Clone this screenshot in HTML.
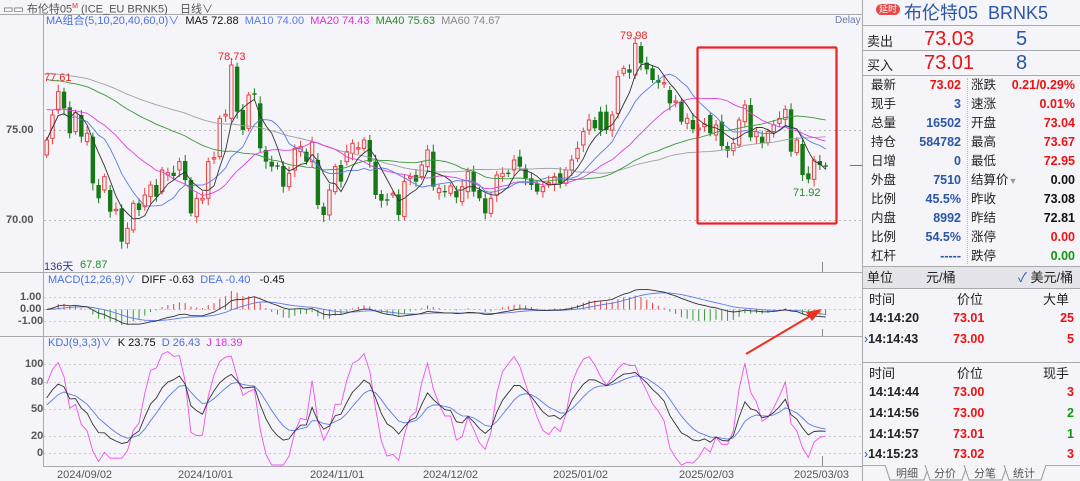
<!DOCTYPE html>
<html><head><meta charset="utf-8"><style>
*{margin:0;padding:0;box-sizing:border-box}
body{width:1080px;height:481px;background:#f4f4f9;font-family:"Liberation Sans","Noto Sans CJK SC",sans-serif;position:relative;overflow:hidden}
.a{position:absolute;white-space:nowrap}
.rp{position:absolute;left:862px;top:0;width:218px;height:481px;border-left:1px solid #aaa;background:#f4f4f9}
.row{position:absolute;left:0;width:218px;font-size:12.5px;height:19px;line-height:19px}
.l{position:absolute;left:8px;color:#222}
.v{position:absolute;right:120px;font-weight:bold;text-align:right}
.l2{position:absolute;left:108px;color:#222}
.v2{position:absolute;right:6px;font-weight:bold;text-align:right}
.red{color:#ee1111}.blu{color:#2a56a8}.blk{color:#111}.grn{color:#119911}
.t{position:absolute;font-size:12.5px;font-weight:bold;height:20px;line-height:20px}
</style></head><body>
<svg id="ch" width="862" height="481" style="position:absolute;left:0;top:0" xmlns="http://www.w3.org/2000/svg"></svg>

<div class="a" style="left:3px;top:0;font-size:11px;color:#555;line-height:13px">▭▭ 布伦特05<sup style="color:#e22;font-size:7px">M</sup> (ICE_EU BRNK5)&nbsp;&nbsp;&nbsp;&nbsp;日线∨</div>
<div class="a" style="left:46px;top:14px;font-size:11px;line-height:14px"><span style="color:#4a6ee0">MA组合(5,10,20,40,60,0)∨</span>&nbsp;&nbsp;<span style="color:#111">MA5 72.88</span>&nbsp;&nbsp;<span style="color:#5b7be8">MA10 74.00</span>&nbsp;&nbsp;<span style="color:#e030e0">MA20 74.43</span>&nbsp;&nbsp;<span style="color:#2a8a2a">MA40 75.63</span>&nbsp;&nbsp;<span style="color:#888">MA60 74.67</span></div>
<div class="a" style="left:835px;top:15px;font-size:10px;color:#6a7ab0">Delay</div>
<div class="a" style="left:6px;top:124px;font-size:11px;color:#555;font-weight:bold">75.00</div>
<div class="a" style="left:6px;top:214px;font-size:11px;color:#555;font-weight:bold">70.00</div>
<div class="a" style="left:44px;top:72px;font-size:11px;color:#e22">77.61</div>
<div class="a" style="left:218px;top:51px;font-size:11px;color:#e22">78.73</div>
<div class="a" style="left:620px;top:30px;font-size:11px;color:#e22">79.98</div>
<div class="a" style="left:80px;top:259px;font-size:11px;color:#2a8a2a">67.87</div>
<div class="a" style="left:793px;top:187px;font-size:11px;color:#2a8a2a">71.92</div>
<div class="a" style="left:44px;top:258px;font-size:11px;color:#2a3a9a">136天</div>
<div class="a" style="left:48px;top:274px;font-size:11px;line-height:13px"><span style="color:#4a6ee0">MACD(12,26,9)∨</span>&nbsp;&nbsp;<span style="color:#111">DIFF -0.63</span>&nbsp;&nbsp;<span style="color:#4a6ee0">DEA -0.40</span>&nbsp;&nbsp;&nbsp;<span style="color:#111">-0.45</span></div>
<div class="a" style="left:20px;top:291px;font-size:11px;color:#555;font-weight:bold">1.00</div>
<div class="a" style="left:20px;top:303px;font-size:11px;color:#555;font-weight:bold">0.00</div>
<div class="a" style="left:18px;top:315px;font-size:11px;color:#555;font-weight:bold">-1.00</div>
<div class="a" style="left:48px;top:337px;font-size:11px;line-height:13px"><span style="color:#4a6ee0">KDJ(9,3,3)∨</span>&nbsp;&nbsp;<span style="color:#111">K 23.75</span>&nbsp;&nbsp;<span style="color:#4a6ee0">D 26.43</span>&nbsp;&nbsp;<span style="color:#e030e0">J 18.39</span></div>
<div class="a" style="left:25px;top:358px;font-size:11px;color:#555;font-weight:bold">100</div>
<div class="a" style="left:31px;top:376px;font-size:11px;color:#555;font-weight:bold">80</div>
<div class="a" style="left:31px;top:403px;font-size:11px;color:#555;font-weight:bold">50</div>
<div class="a" style="left:31px;top:430px;font-size:11px;color:#555;font-weight:bold">20</div>
<div class="a" style="left:37px;top:447px;font-size:11px;color:#555;font-weight:bold">0</div>
<div class="a" style="left:57px;top:469px;font-size:11px;color:#555">2024/09/02</div>
<div class="a" style="left:178px;top:469px;font-size:11px;color:#555">2024/10/01</div>
<div class="a" style="left:310px;top:469px;font-size:11px;color:#555">2024/11/01</div>
<div class="a" style="left:423px;top:469px;font-size:11px;color:#555">2024/12/02</div>
<div class="a" style="left:553px;top:469px;font-size:11px;color:#555">2025/01/02</div>
<div class="a" style="left:679px;top:469px;font-size:11px;color:#555">2025/02/03</div>
<div class="a" style="left:794px;top:469px;font-size:11px;color:#555">2025/03/03</div>

<div class="rp">
 <div class="a" style="left:13px;top:4px;background:#e84848;color:#fff;font-size:9px;border-radius:6px;padding:0 3px;line-height:11px">延时</div>
 <div class="a" style="left:41px;top:2px;font-size:18px;color:#2a56a8;line-height:22px">布伦特05&nbsp;&nbsp;BRNK5</div>
 <div class="a" style="left:0;top:25px;width:218px;border-top:1px solid #aaa"></div>
 <div class="a" style="left:4px;top:30px;font-size:13px;line-height:24px;color:#222">卖出</div>
 <div class="a" style="left:61px;top:26px;font-size:20px;line-height:26px;color:#ee1111">73.03</div>
 <div class="a" style="left:153px;top:26px;font-size:20px;line-height:26px;color:#2a56a8">5</div>
 <div class="a" style="left:0;top:50px;width:218px;border-top:1px solid #aaa"></div>
 <div class="a" style="left:4px;top:54px;font-size:13px;line-height:24px;color:#222">买入</div>
 <div class="a" style="left:61px;top:50px;font-size:20px;line-height:26px;color:#ee1111">73.01</div>
 <div class="a" style="left:153px;top:50px;font-size:20px;line-height:26px;color:#2a56a8">8</div>
 <div class="a" style="left:0;top:75px;width:218px;border-top:1px solid #aaa"></div>
 <div class="a" style="left:104px;top:78px;height:186px;border-left:1px dotted #bbb"></div>
 <div class="row" style="top:76px"><span class="l">最新</span><span class="v red">73.02</span><span class="l2">涨跌</span><span class="v2 red">0.21/0.29%</span></div>
 <div class="row" style="top:95px"><span class="l">现手</span><span class="v blu">3</span><span class="l2">速涨</span><span class="v2 red">0.01%</span></div>
 <div class="row" style="top:114px"><span class="l">总量</span><span class="v blu">16502</span><span class="l2">开盘</span><span class="v2 red">73.04</span></div>
 <div class="row" style="top:133px"><span class="l">持仓</span><span class="v blu">584782</span><span class="l2">最高</span><span class="v2 red">73.67</span></div>
 <div class="row" style="top:152px"><span class="l">日增</span><span class="v blu">0</span><span class="l2">最低</span><span class="v2 red">72.95</span></div>
 <div class="row" style="top:171px"><span class="l">外盘</span><span class="v blu">7510</span><span class="l2">结算价<span style="color:#999;font-size:9px">▼</span></span><span class="v2 blk">0.00</span></div>
 <div class="row" style="top:190px"><span class="l">比例</span><span class="v blu">45.5%</span><span class="l2">昨收</span><span class="v2 blk">73.08</span></div>
 <div class="row" style="top:209px"><span class="l">内盘</span><span class="v blu">8992</span><span class="l2">昨结</span><span class="v2 blk">72.81</span></div>
 <div class="row" style="top:228px"><span class="l">比例</span><span class="v blu">54.5%</span><span class="l2">涨停</span><span class="v2 red">0.00</span></div>
 <div class="row" style="top:247px"><span class="l">杠杆</span><span class="v blu">-----</span><span class="l2">跌停</span><span class="v2 grn">0.00</span></div>
 <div class="a" style="left:0;top:266px;width:218px;height:23px;background:#e4e4ea;border-top:1px solid #aaa;border-bottom:1px solid #aaa"></div>
 <div class="a" style="left:4px;top:268px;font-size:13px;line-height:19px;color:#222">单位</div>
 <div class="a" style="left:63px;top:268px;font-size:13px;line-height:19px;color:#222">元/桶</div>
 <div class="a" style="left:155px;top:268px;font-size:13px;line-height:19px;color:#222"><span style="color:#2a56a8">✓</span> 美元/桶</div>
 <div class="a" style="left:6px;top:290px;font-size:13px;line-height:19px;color:#222">时间</div>
 <div class="a" style="left:94px;top:290px;font-size:13px;line-height:19px;color:#222">价位</div>
 <div class="a" style="left:180px;top:290px;font-size:13px;line-height:19px;color:#222">大单</div>
 <div class="t" style="left:6px;top:308px;color:#222">14:14:20</div><div class="t red" style="left:90px;top:308px">73.01</div><div class="t red" style="right:6px;top:308px">25</div>
 <div class="t" style="left:1px;top:329px;color:#222"><span style="color:#2a56a8;font-weight:normal">›</span>14:14:43</div><div class="t red" style="left:90px;top:329px">73.00</div><div class="t red" style="right:6px;top:329px">5</div>
 <div class="a" style="left:0;top:362px;width:218px;border-top:1px solid #aaa"></div>
 <div class="a" style="left:6px;top:364px;font-size:13px;line-height:19px;color:#222">时间</div>
 <div class="a" style="left:94px;top:364px;font-size:13px;line-height:19px;color:#222">价位</div>
 <div class="a" style="left:180px;top:364px;font-size:13px;line-height:19px;color:#222">现手</div>
 <div class="t" style="left:6px;top:382px;color:#222">14:14:44</div><div class="t red" style="left:90px;top:382px">73.00</div><div class="t red" style="right:6px;top:382px">3</div>
 <div class="t" style="left:6px;top:403px;color:#222">14:14:56</div><div class="t red" style="left:90px;top:403px">73.00</div><div class="t grn" style="right:6px;top:403px">2</div>
 <div class="t" style="left:6px;top:424px;color:#222">14:14:57</div><div class="t red" style="left:90px;top:424px">73.01</div><div class="t grn" style="right:6px;top:424px">1</div>
 <div class="t" style="left:1px;top:444px;color:#222"><span style="color:#2a56a8;font-weight:normal">›</span>14:15:23</div><div class="t red" style="left:90px;top:444px">73.02</div><div class="t red" style="right:6px;top:444px">3</div>
 <div class="a" style="left:0;top:465px;width:218px;border-top:1px solid #aaa"></div>
 <svg class="a" style="left:0;top:465px" width="218" height="16"><g fill="#f4f4f9" stroke="#999"><path d="M22 0 L27 15 L61 15 L66 0"/><path d="M62 0 L67 15 L99 15 L104 0"/><path d="M101 0 L106 15 L139 15 L144 0"/><path d="M141 0 L146 15 L178 15 L183 0"/></g>
 <g font-size="11" fill="#555" font-family="Liberation Sans,Noto Sans CJK SC,sans-serif"><text x="33" y="12">明细</text><text x="71" y="12">分价</text><text x="111" y="12">分笔</text><text x="150" y="12">统计</text></g></svg>
</div>

<script>
var Z5=[[330,375,'r'],[255,325,'r'],[185,240,'r'],[185,235,'g'],[232,310,'g'],[248,305,'r'],[255,320,'g'],[310,335,'r'],[320,460,'g'],[465,505,'g'],[440,480,'r'],[480,545,'g'],[538,542,'r'],[535,635,'g'],[595,640,'r'],[520,600,'r'],[520,540,'g'],[495,530,'r'],[465,500,'r'],[465,500,'g'],[420,485,'r'],[428,435,'r'],[428,438,'g'],[395,420,'r'],[393,450,'g'],[450,550,'g'],[505,560,'r'],[505,510,'r'],[395,505,'r'],[383,387,'r'],[265,380,'r'],[253,258,'r'],[105,265,'r'],[110,245,'g'],[240,300,'g'],[195,295,'r'],[190,194,'g'],[220,355,'g'],[360,395,'g'],[395,410,'g'],[406,410,'g'],[408,470,'g'],[430,470,'r'],[355,420,'r'],[350,365,'r'],[365,395,'g'],[335,395,'r'],[390,525,'g'],[530,555,'g'],[480,555,'r'],[410,485,'r'],[405,455,'g'],[365,395,'r'],[340,370,'r'],[353,357,'r'],[330,355,'r'],[330,395,'g'],[395,495,'g'],[492,512,'g'],[508,512,'g'],[490,495,'r'],[493,555,'g'],[455,560,'r'],[440,445,'r'],[435,455,'g'],[405,440,'r'],[360,410,'r'],[365,470,'g'],[475,488,'r'],[483,487,'g'],[468,490,'r'],[483,502,'g']];
var Z6=[[470,515,'r'],[425,485,'r'],[425,485,'g'],[480,505,'g'],[505,550,'g'],[505,550,'r'],[435,495,'r'],[430,440,'r'],[428,432,'g'],[390,420,'r'],[380,410,'g'],[415,445,'g'],[445,465,'g'],[460,485,'g'],[470,485,'r'],[458,462,'r'],[440,462,'r'],[430,460,'g'],[420,460,'r'],[390,420,'r'],[355,385,'r'],[305,345,'r'],[270,300,'r'],[270,295,'g'],[245,300,'g'],[245,300,'g'],[255,300,'r'],[140,250,'r'],[115,130,'r'],[118,128,'g'],[40,135,'r'],[48,100,'g'],[98,118,'g'],[115,150,'g'],[150,158,'g'],[158,162,'r'],[180,220,'g'],[213,217,'r'],[215,275,'g'],[265,280,'r'],[270,298,'g'],[294,298,'r'],[282,290,'r'],[255,310,'g'],[285,315,'r'],[275,348,'g'],[348,362,'g'],[340,362,'r'],[270,345,'r'],[225,275,'r'],[225,322,'g'],[305,320,'r'],[320,340,'g'],[305,338,'r'],[285,305,'r'],[265,280,'r'],[238,268,'r'],[238,365,'g'],[330,368,'r'],[342,435,'g'],[430,448,'g'],[390,448,'r'],[393,405,'g'],[406,410,'g']];
var D=Z5.concat(Z6),s='',N=D.length;
function X(i){return 46.7+i*5.77}
function L(x1,y1,x2,y2,c,d){return '<line x1="'+x1+'" y1="'+y1+'" x2="'+x2+'" y2="'+y2+'" stroke="'+c+'"'+(d?' stroke-dasharray="2,3"':'')+'/>'}
s+=L(0,14.5,862,14.5,'#aaa');
s+=L(43.5,14,43.5,466,'#aaa');
s+=L(0,272.5,862,272.5,'#aaa');s+=L(0,336.5,862,336.5,'#aaa');s+=L(43,466.5,862,466.5,'#aaa');
[130,220].forEach(function(y){s+=L(44,y+.5,862,y+.5,'#bbb',1)});
[297,309,321].forEach(function(y){s+=L(44,y+.5,862,y+.5,'#ccc',1)});
[364,382,409,436,453].forEach(function(y){s+=L(44,y+.5,862,y+.5,'#ccc',1)});
var C=[],H=[],Lo=[];
for(var i=0;i<N;i++){var d=D[i],t=30+d[0]/3,b=30+d[1]/3,x=X(i);
 var ht=t-3-(i*7%5),lb=b+3+(i*3%5);H.push(ht);Lo.push(lb);
 C.push(d[2]=='r'?t:b);
 var col=d[2]=='r'?'#e84040':'#157a15';
 s+=L(x,ht,x,lb,col);
 var h=Math.max(b-t,1);
 if(d[2]=='r')s+='<rect x="'+(x-1.7)+'" y="'+t+'" width="3.4" height="'+h+'" fill="#f6f0f4" stroke="#e84040" stroke-width="1"/>';
 else s+='<rect x="'+(x-2.2)+'" y="'+t+'" width="4.4" height="'+h+'" fill="#157a15"/>';
}
function ma(n){var p=[];var pre={60:72,40:78,20:108}[n]||0;for(var i=0;i<N;i++){var a=0,c=0;for(var j=Math.max(0,i-n+1);j<=i;j++){a+=C[j];c++}
 var v=a/c; if(i<n&&pre){v=(a+pre*(n-c))/n;}
 p.push(X(i).toFixed(1)+','+v.toFixed(1))}return p.join(' ')}
[[60,'#a0a0a0'],[40,'#3a9a3a'],[20,'#e040e0'],[10,'#5b7be8'],[5,'#333']].forEach(function(m){s+='<polyline fill="none" stroke="'+m[1]+'" stroke-width="0.9" points="'+ma(m[0])+'"/>'});
var P=C.map(function(y){return 75-(y-130)/18}),e12=P[0],e26=P[0],dea=0,dp=[],ep=[];
for(var i=0;i<N;i++){e12=e12*11/13+P[i]*2/13;e26=e26*25/27+P[i]*2/27;var df=e12-e26;dea=dea*0.8+df*0.2;
 var hh=(df-dea)*2,x=X(i),y0=309.5;
 var yy=y0-hh*12;yy=Math.max(286,Math.min(334,yy));
 s+=L(x,y0,x,yy,hh>0?'#e84040':'#3a9a3a');
 dp.push(x.toFixed(1)+','+Math.max(286,Math.min(335,y0-df*12)).toFixed(1));ep.push(x.toFixed(1)+','+Math.max(286,Math.min(335,y0-dea*12)).toFixed(1));}
s+='<polyline fill="none" stroke="#5b7be8" stroke-width="0.9" points="'+ep.join(' ')+'"/>';
s+='<polyline fill="none" stroke="#333" stroke-width="0.9" points="'+dp.join(' ')+'"/>';
var K=50,Dd=50,kp=[],dpp=[],jp=[];
function ky(v){return Math.max(340,Math.min(465,453-v*0.89)).toFixed(1)}
for(var i=0;i<N;i++){var hi=1e9,lo=-1e9;for(var j=Math.max(0,i-8);j<=i;j++){hi=Math.min(hi,H[j]);lo=Math.max(lo,Lo[j])}
 var rsv=lo==hi?50:(lo-C[i])/(lo-hi)*100;K=K*2/3+rsv/3;Dd=Dd*2/3+K/3;var J=3*K-2*Dd;var x=X(i).toFixed(1);
 kp.push(x+','+ky(K));dpp.push(x+','+ky(Dd));jp.push(x+','+ky(J));}
s+='<polyline fill="none" stroke="#f050f0" stroke-width="0.9" points="'+jp.join(' ')+'"/>';
s+='<polyline fill="none" stroke="#5b7be8" stroke-width="0.9" points="'+dpp.join(' ')+'"/>';
s+='<polyline fill="none" stroke="#333" stroke-width="0.9" points="'+kp.join(' ')+'"/>';
s+=L(850,165.5,862,165.5,'#5b6be8');
s+=L(822.5,262,822.5,272,'#888');s+=L(822.5,329,822.5,336,'#888');s+=L(822.5,456,822.5,466,'#888');
s+='<rect x="697.5" y="47.5" width="139" height="176" fill="none" stroke="#f02020" stroke-width="2.2" rx="1"/>';
s+='<line x1="746" y1="354" x2="812" y2="315" stroke="#f03020" stroke-width="2"/><polygon points="822,309 806,312 812,321" fill="#f03020"/>';
document.getElementById('ch').innerHTML=s;
</script>
</body></html>
